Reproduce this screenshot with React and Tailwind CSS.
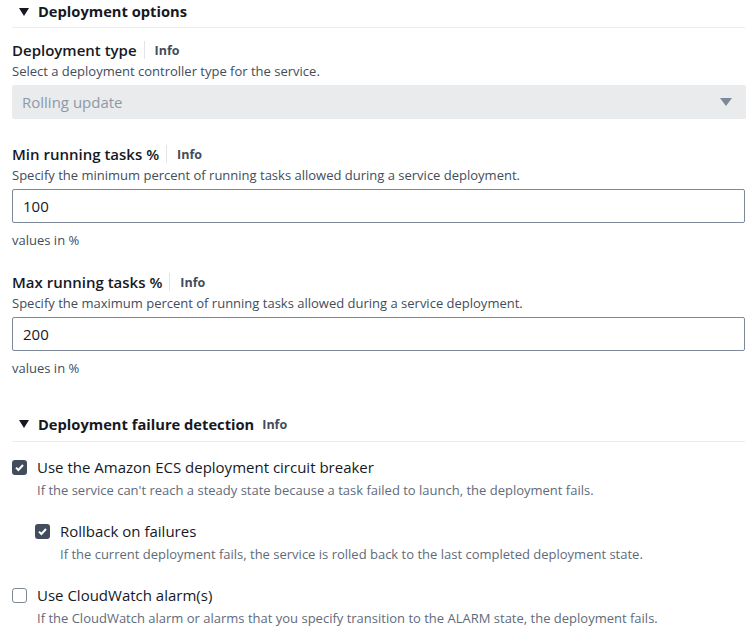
const font = { fontFamily: '"Open Sans", "Noto Sans", sans-serif' }

// ── small pieces
function Caret() {
  return (
    <svg width="12" height="10" viewBox="0 0 12 10" className="shrink-0">
      <path d="M1 1h10L6 9z" fill="#16191f" />
    </svg>
  )
}

function Info() {
  return <span className="text-[12.5px] font-bold text-[#414d5c] pt-[2px]">Info</span>
}

function Label({ children }) {
  return (
    <div className="flex items-center h-[20px]">
      <span className="text-[15px] font-semibold text-[#16191f]">{children}</span>
      <span className="ml-[7px] mr-[10px] h-[18px] w-px bg-[#e1e4e8]" />
      <Info />
    </div>
  )
}

function Check({ checked }) {
  return checked ? (
    <span className="block w-[15px] h-[15px] rounded-[3px] bg-[#414d5c] flex items-center justify-center shrink-0">
      <svg width="11" height="11" viewBox="0 0 11 11">
        <path d="M2 5.6l2.4 2.4L9 3" stroke="#fff" strokeWidth="2" fill="none" />
      </svg>
    </span>
  ) : (
    <span className="block w-[15px] h-[15px] rounded-[3px] border border-[#7d8998] bg-white shrink-0" />
  )
}

function Option({ checked, title, desc, indent = '' }) {
  return (
    <div className={`flex ${indent}`}>
      <div className="pt-[3px] pr-[10px] shrink-0">
        <Check checked={checked} />
      </div>
      <div>
        <p className="text-[15px] leading-[20px] text-[#16191f]">{title}</p>
        <p className="mt-[4px] text-[13px] leading-[18px] text-[#5f6b7a]">{desc}</p>
      </div>
    </div>
  )
}

function NumberField({ label, desc, value }) {
  return (
    <div>
      <Label>{label}</Label>
      <p className="mt-[2px] text-[13px] leading-[18px] text-[#414d5c]">{desc}</p>
      <div className="mt-[5px] h-[34px] w-[733px] border border-[#7d8998] rounded-[2px] flex items-center px-[10px] text-[15px] text-[#16191f]">
        {value}
      </div>
      <p className="mt-[8px] text-[13px] leading-[18px] text-[#414d5c]">values in %</p>
    </div>
  )
}

export default function App() {
  return (
    <div className="w-[756px] h-[634px] bg-white overflow-hidden" style={font}>
      {/* Deployment options header */}
      <div className="pl-[18px] pt-[1px] flex items-center gap-[8px] h-[22px]">
        <Caret />
        <span className="text-[14.7px] font-bold text-[#16191f]">Deployment options</span>
      </div>
      <div className="ml-[12px] mt-[5px] w-[733px] border-t border-[#e9ebed]" />

      <div className="pl-[12px] pt-[12px]">
        <Label>Deployment type</Label>
        <p className="mt-[2px] text-[13px] leading-[18px] text-[#414d5c]">
          Select a deployment controller type for the service.
        </p>
        <div className="mt-[5px] h-[34px] w-[734px] bg-[#e9ebed] rounded-[2px] flex items-center justify-between pl-[10px] pr-[14px]">
          <span className="text-[15px] text-[#8d99a8]">Rolling update</span>
          <svg width="12" height="9" viewBox="0 0 12 9">
            <path d="M0 0h12L6 8z" fill="#7d8998" />
          </svg>
        </div>

        <div className="mt-[25px]">
          <NumberField
            label="Min running tasks %"
            desc="Specify the minimum percent of running tasks allowed during a service deployment."
            value="100"
          />
        </div>
        <div className="mt-[23px]">
          <NumberField
            label="Max running tasks %"
            desc="Specify the maximum percent of running tasks allowed during a service deployment."
            value="200"
          />
        </div>
      </div>

      {/* Deployment failure detection */}
      <div className="mt-[36px] pl-[18px] flex items-center gap-[8px] h-[22px]">
        <Caret />
        <span className="text-[14.7px] font-bold text-[#16191f]">Deployment failure detection</span>
        <Info />
      </div>
      <div className="ml-[12px] mt-[6px] w-[733px] border-t border-[#e9ebed]" />

      <div className="pl-[12px] pt-[15px] flex flex-col gap-[22px]">
        <Option
          checked
          title="Use the Amazon ECS deployment circuit breaker"
          desc="If the service can't reach a steady state because a task failed to launch, the deployment fails."
        />
        <Option
          checked
          indent="ml-[23px]"
          title="Rollback on failures"
          desc="If the current deployment fails, the service is rolled back to the last completed deployment state."
        />
        <Option
          title="Use CloudWatch alarm(s)"
          desc="If the CloudWatch alarm or alarms that you specify transition to the ALARM state, the deployment fails."
        />
      </div>
    </div>
  )
}
